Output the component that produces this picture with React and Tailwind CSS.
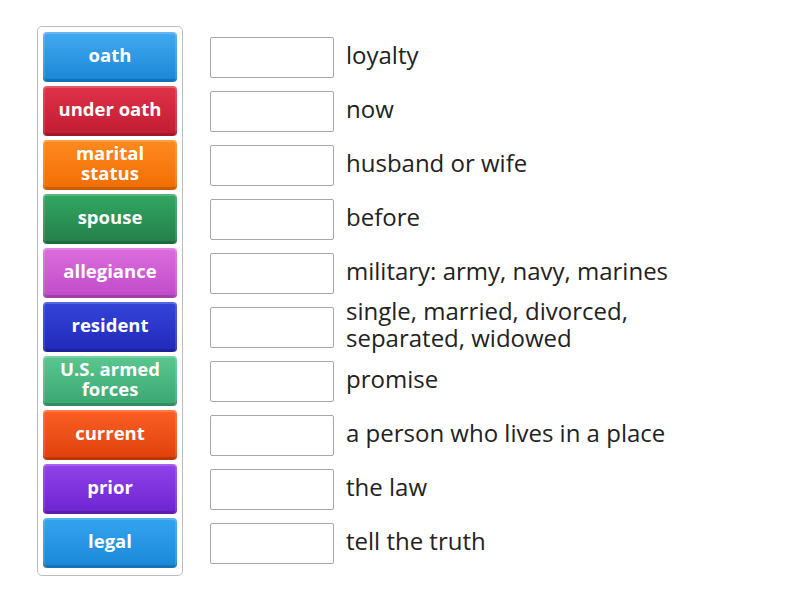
import React from "react";

const tiles = [
  { label: "oath", cls: "from-[#42aaf0] to-[#1786d6]" },
  { label: "under oath", cls: "from-[#e0324a] to-[#c01b30]" },
  { label: "marital status", cls: "from-[#ff8a1f] to-[#f06d00]" },
  { label: "spouse", cls: "from-[#32a862] to-[#237f49]" },
  { label: "allegiance", cls: "from-[#dc6ddf] to-[#c04ac8]" },
  { label: "resident", cls: "from-[#3444da] to-[#2129b8]" },
  { label: "U.S. armed forces", cls: "from-[#5ac790] to-[#3aa672]" },
  { label: "current", cls: "from-[#fb5f24] to-[#e0400a]" },
  { label: "prior", cls: "from-[#9242ea] to-[#6c22d0]" },
  { label: "legal", cls: "from-[#34a3ef] to-[#1888d8]" },
];

const defs = [
  "loyalty",
  "now",
  "husband or wife",
  "before",
  "military: army, navy, marines",
  "single, married, divorced, separated, widowed",
  "promise",
  "a person who lives in a place",
  "the law",
  "tell the truth",
];

export default function App() {
  return (
    <div
      className="w-[800px] h-[600px] bg-white flex items-start pl-[37px] pt-[26px]"
      style={{ fontFamily: '"Open Sans", "Noto Sans", sans-serif' }}
    >
      <div className="w-[146px] border border-[#bcbcbc] rounded-[5px] pt-[5px] px-[5px] pb-[7px] flex flex-col gap-[4px]">
        {tiles.map((t) => (
          <div
            key={t.label}
            className={`h-[50px] w-[134px] rounded-[4px] bg-linear-to-b ${t.cls} shadow-[inset_0_2px_0_rgba(255,255,255,0.18),inset_2px_0_0_rgba(255,255,255,0.12),inset_-2px_0_0_rgba(255,255,255,0.12),inset_0_-3px_0_rgba(0,0,0,0.16)] flex items-center justify-center text-center px-1 pb-[4px] text-white font-bold text-[18.5px] leading-[20px]`}
          >
            <span className="max-w-[120px]">{t.label}</span>
          </div>
        ))}
      </div>
      <div className="ml-[27px] pt-[6px] flex flex-col gap-[4px]">
        {defs.map((d) => (
          <div key={d} className="h-[50px] flex items-center">
            <div className="w-[124px] h-[41px] border border-[#a8a8a8] rounded-[2px] bg-white shrink-0" />
            <div className="ml-[12px] pb-[6px] text-[24px] leading-[27px] text-[#222] max-w-[330px]">
              {d}
            </div>
          </div>
        ))}
      </div>
    </div>
  );
}
